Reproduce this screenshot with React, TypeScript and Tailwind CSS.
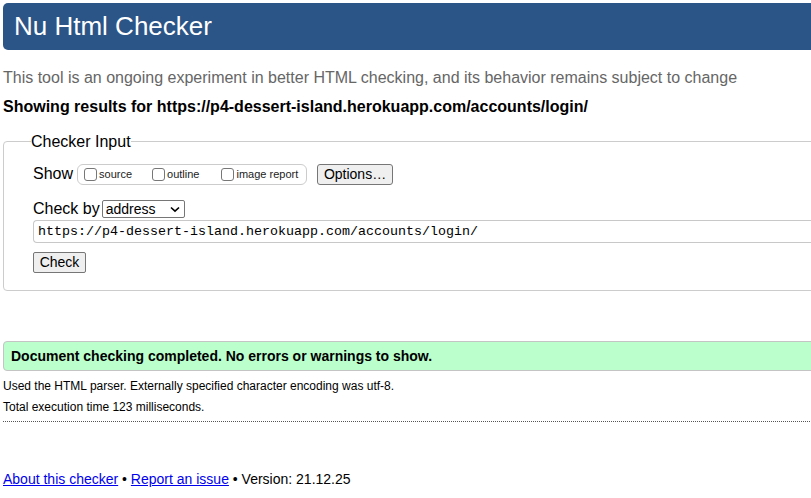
import React from "react";

export default function App() {
  return (
    <div className="w-[811px] h-[498px] overflow-hidden bg-white text-black font-['Liberation_Sans',Arial,sans-serif]">
      <div className="w-[840px] pl-[3px] pt-[3px]">
        <h1 className="bg-[#2c5587] text-white text-[26px] leading-[47px] h-[47px] pl-[11px] rounded-l-[5px]">
          Nu Html Checker
        </h1>
        <p className="text-[#666] text-[16px] leading-[19px] mt-[18px]">
          This tool is an ongoing experiment in better HTML checking, and its behavior remains subject to change
        </p>
        <p className="font-bold text-[16px] leading-[19px] mt-[10px]">
          Showing results for https://p4-dessert-island.herokuapp.com/accounts/login/
        </p>
        <fieldset className="mt-[16px] border border-[#ccc] rounded-[4px] pl-[29px] pr-2 pb-[16px] pt-[12px]">
          <legend className="text-[16px] leading-[19px] px-[0px] ml-[-2px]">Checker Input</legend>
          <div className="flex items-center h-[22px]">
            <span className="text-[16px]">Show</span>
            <div className="ml-[4px] flex items-center border border-[#ccc] rounded-[6px] h-[21px] w-[230px] pl-[6px]">
              <label className="flex items-end text-[11px] text-[#222] leading-[13px]">
                <span className="w-[13px] h-[13px] border border-[#777] rounded-[3px] bg-white mr-[2px]" />
                source
              </label>
              <label className="flex items-end text-[11px] text-[#222] ml-[20px] leading-[13px]">
                <span className="w-[13px] h-[13px] border border-[#777] rounded-[3px] bg-white mr-[2px]" />
                outline
              </label>
              <label className="flex items-end text-[11px] text-[#222] ml-[22px] leading-[13px]">
                <span className="w-[13px] h-[13px] border border-[#777] rounded-[3px] bg-white mr-[2px]" />
                image report
              </label>
            </div>
            <button className="ml-[10px] h-[21px] w-[76px] border border-[#767676] rounded-[3px] bg-[#efefef] text-[14px] leading-[19px]">
              Options…
            </button>
          </div>
          <div className="flex items-center mt-[14px] h-[20px]">
            <span className="text-[16px]">Check by</span>
            <div className="ml-[2px] h-[18px] w-[83px] border border-[#767676] rounded-[2px] bg-white flex items-center justify-between pl-[3px] pr-[4px] text-[14px]">
              <span>address</span>
              <svg width="10" height="7" viewBox="0 0 10 7">
                <path d="M1 1.5 L5 5.2 L9 1.5" fill="none" stroke="#000" strokeWidth="1.6" />
              </svg>
            </div>
          </div>
          <div className="mt-[1px] h-[23px] border border-[#c8c8c8] rounded-l-[4px] border-r-0 flex items-center pl-[4px] font-['Liberation_Mono',monospace] text-[13.33px]">
            https://p4-dessert-island.herokuapp.com/accounts/login/
          </div>
          <button className="mt-[9px] h-[21px] w-[53px] border border-[#767676] rounded-[2px] bg-[#efefef] text-[14px] leading-[19px]">
            Check
          </button>
        </fieldset>
        <div className="mt-[50px] h-[30px] bg-[#bbffcc] border border-[#c4c4c4] rounded-l-[4px] flex items-center pl-[7px] font-bold text-[14px]">
          Document checking completed. No errors or warnings to show.
        </div>
        <p className="text-[12px] leading-[14px] mt-[8px]">
          Used the HTML parser. Externally specified character encoding was utf-8.
        </p>
        <p className="text-[12px] leading-[14px] mt-[7px]">Total execution time 123 milliseconds.</p>
        <div className="mt-[7px] border-t border-dotted border-[#555]" />
        <p className="text-[14px] leading-[16px] mt-[49px]">
          <a href="#" className="text-[#0000ee] underline">About this checker</a>
          {" • "}
          <a href="#" className="text-[#0000ee] underline">Report an issue</a>
          {" • Version: 21.12.25"}
        </p>
      </div>
    </div>
  );
}
